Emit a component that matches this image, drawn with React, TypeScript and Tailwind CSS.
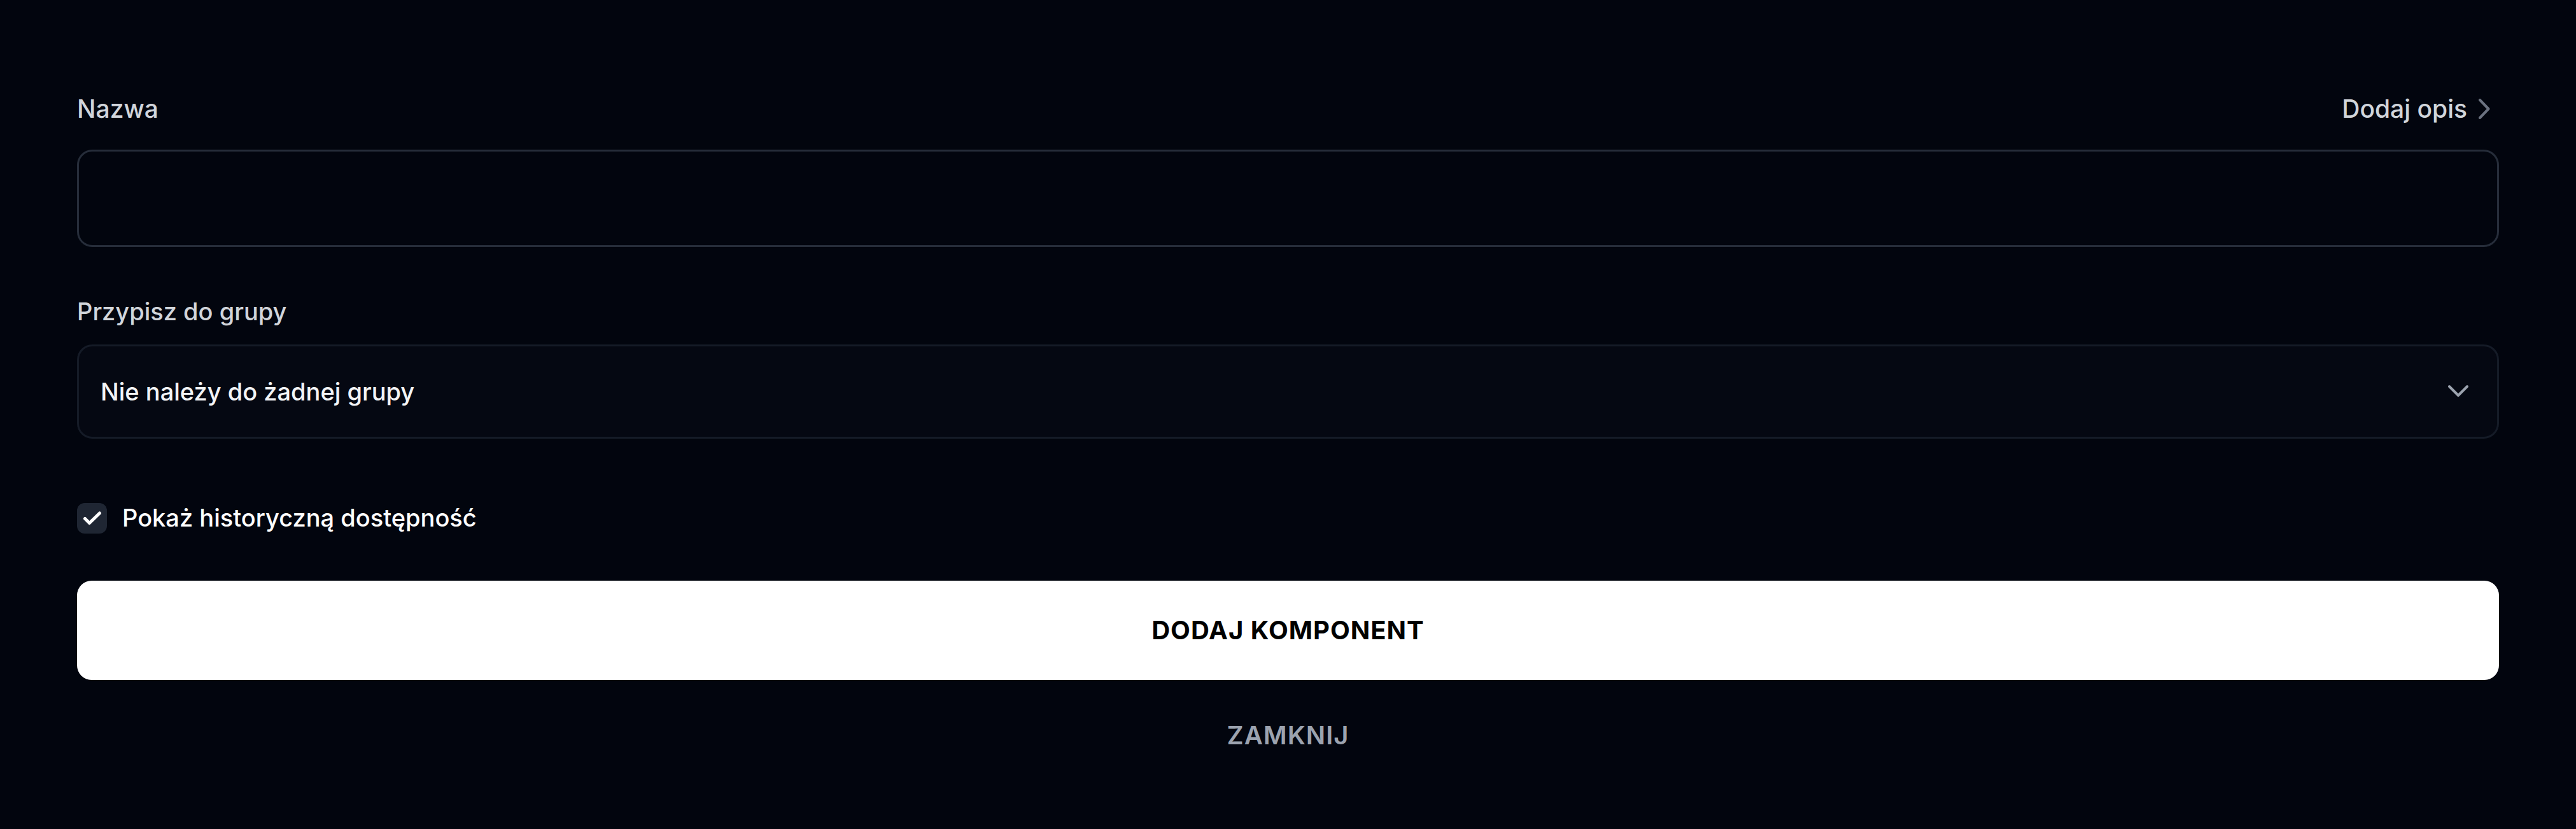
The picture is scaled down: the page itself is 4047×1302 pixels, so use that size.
import React from "react";

export default function App() {
  return (
    <div className="min-h-[1302px] w-full bg-[#02050e] font-['Inter','Noto_Sans',sans-serif] antialiased">
      <div className="px-[121px] pt-[141px] flex flex-col">
        <div className="flex items-center justify-between h-[60px]">
          <span className="text-[39px] leading-[60px] font-medium text-[#d1d5db]">Nazwa</span>
          <button className="flex items-center gap-[18px] text-[39px] leading-[60px] font-medium text-[#d1d5db]">
            <span>Dodaj opis</span>
            <svg width="18" height="32" viewBox="0 0 18 32" fill="none" className="mr-[14px]">
              <path d="M2 2 L15.5 16 L2 30" stroke="#6b7280" strokeWidth="4" strokeLinecap="round" strokeLinejoin="round" />
            </svg>
          </button>
        </div>
        <div className="mt-[34px] h-[153px] rounded-[24px] border-[3px] border-[#262d3a] bg-[#02050e]" />
        <div className="mt-[73px] h-[57px] flex items-center">
          <span className="text-[38px] leading-[57px] font-medium text-[#d1d5db]">Przypisz do grupy</span>
        </div>
        <div className="mt-[23px] h-[148px] rounded-[24px] border-[3px] border-[#151b27] bg-[#050812] flex items-center justify-between pl-[34px] pr-[44px]">
          <span className="text-[38px] leading-[57px] font-medium text-[#f3f4f6]">Nie należy do żadnej grupy</span>
          <svg width="34" height="22" viewBox="0 0 34 22" fill="none">
            <path d="M3 3 L17 17 L31 3" stroke="#9ca3af" strokeWidth="4" strokeLinecap="round" strokeLinejoin="round" />
          </svg>
        </div>
        <div className="mt-[96px] flex items-center gap-[24px]">
          <div className="w-[47px] h-[48px] rounded-[12px] bg-[#1f2633] flex items-center justify-center">
            <svg width="30" height="24" viewBox="0 0 30 24" fill="none">
              <path d="M3.5 12.5 L10.5 19.5 L26.5 4" stroke="#ffffff" strokeWidth="5" strokeLinecap="round" strokeLinejoin="round" />
            </svg>
          </div>
          <span className="text-[38px] leading-[57px] font-medium text-white">Pokaż historyczną dostępność</span>
        </div>
        <button className="mt-[70px] h-[156px] rounded-[23px] bg-white flex items-center justify-center">
          <span className="text-[40px] leading-[60px] font-bold tracking-[1px] text-black">DODAJ KOMPONENT</span>
        </button>
        <div className="mt-[57px] flex justify-center">
          <span className="text-[40px] leading-[60px] font-semibold tracking-[1px] text-[#9ca3af]">ZAMKNIJ</span>
        </div>
      </div>
    </div>
  );
}
